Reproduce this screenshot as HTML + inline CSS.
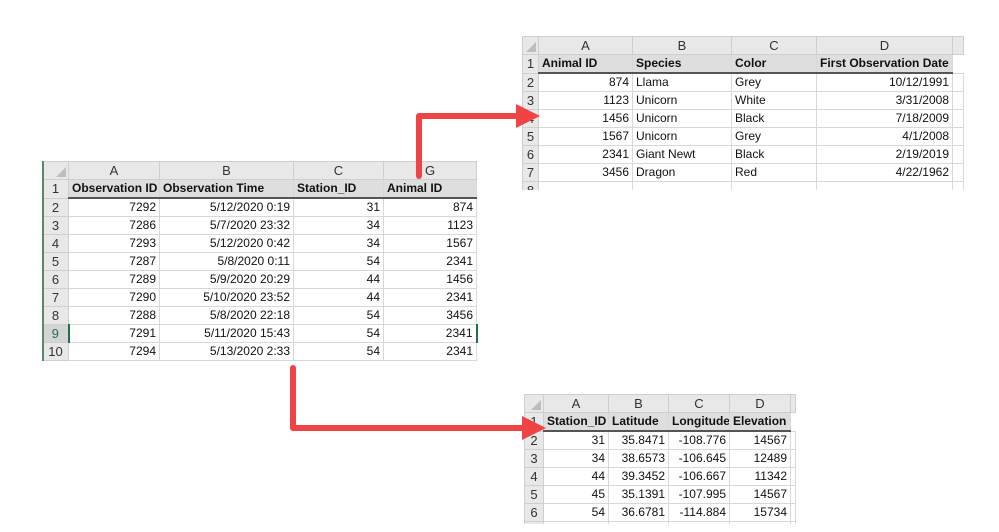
<!DOCTYPE html>
<html><head><meta charset="utf-8"><style>
body{margin:0;width:999px;height:532px;background:#fff;position:relative;overflow:hidden;font-family:"Liberation Sans",Arial,sans-serif;}
.w{position:absolute;overflow:hidden;}
table{border-collapse:collapse;table-layout:fixed;font-size:12px;color:#111;}
td{border:1px solid #d8d8d8;padding:0 3px;white-space:nowrap;overflow:hidden;height:17px;line-height:17px;}
tr.ch td{background:#e8e8e8;text-align:center;color:#333;border-color:#cfcfcf;font-size:13px}
td.rh{background:#e8e8e8;text-align:center;color:#333;padding:0;border-color:#cfcfcf;font-size:13px}
tr.h td:not(.rh){background:#dedede;font-weight:bold;border-bottom:2px solid #555;}
.r{text-align:right}
.corner{position:relative}
.corner:after{content:"";position:absolute;right:2px;bottom:2px;border-left:10px solid transparent;border-bottom:10px solid #bdbdbd;}
</style></head><body>

<table style="position:absolute;left:42px;top:161px;width:434px">
<colgroup><col style="width:26px"><col style="width:91px"><col style="width:134px"><col style="width:90px"><col style="width:93px"></colgroup>
<tr class="ch"><td class="corner"></td><td>A</td><td>B</td><td>C</td><td>G</td></tr>
<tr class="h"><td class="rh">1</td><td>Observation ID</td><td>Observation Time</td><td>Station_ID</td><td>Animal ID</td></tr>
<tr><td class="rh">2</td><td class="r">7292</td><td class="r">5/12/2020 0:19</td><td class="r">31</td><td class="r">874</td></tr>
<tr><td class="rh">3</td><td class="r">7286</td><td class="r">5/7/2020 23:32</td><td class="r">34</td><td class="r">1123</td></tr>
<tr><td class="rh">4</td><td class="r">7293</td><td class="r">5/12/2020 0:42</td><td class="r">34</td><td class="r">1567</td></tr>
<tr><td class="rh">5</td><td class="r">7287</td><td class="r">5/8/2020 0:11</td><td class="r">54</td><td class="r">2341</td></tr>
<tr><td class="rh">6</td><td class="r">7289</td><td class="r">5/9/2020 20:29</td><td class="r">44</td><td class="r">1456</td></tr>
<tr><td class="rh">7</td><td class="r">7290</td><td class="r">5/10/2020 23:52</td><td class="r">44</td><td class="r">2341</td></tr>
<tr><td class="rh">8</td><td class="r">7288</td><td class="r">5/8/2020 22:18</td><td class="r">54</td><td class="r">3456</td></tr>
<tr><td class="rh" style="background:#d4d4d4;color:#217346;border-right:2px solid #217346">9</td><td class="r">7291</td><td class="r">5/11/2020 15:43</td><td class="r">54</td><td class="r" style="border-right:2px solid #217346">2341</td></tr>
<tr><td class="rh">10</td><td class="r">7294</td><td class="r">5/13/2020 2:33</td><td class="r">54</td><td class="r">2341</td></tr>
</table>
<div style="position:absolute;left:42px;top:161px;width:2px;height:200px;background:#5a8a6a"></div>

<div class="w" style="left:522px;top:36px;width:442px;height:154px">
<table style="width:441px">
<colgroup><col style="width:16px"><col style="width:94px"><col style="width:99px"><col style="width:85px"><col style="width:136px"><col style="width:11px"></colgroup>
<tr class="ch"><td class="corner"></td><td>A</td><td>B</td><td>C</td><td>D</td><td></td></tr>
<tr class="h"><td class="rh">1</td><td>Animal ID</td><td>Species</td><td>Color</td><td>First Observation Date</td><td style="background:#fff;border:none"></td></tr>
<tr><td class="rh">2</td><td class="r">874</td><td>Llama</td><td>Grey</td><td class="r">10/12/1991</td><td></td></tr>
<tr><td class="rh">3</td><td class="r">1123</td><td>Unicorn</td><td>White</td><td class="r">3/31/2008</td><td></td></tr>
<tr><td class="rh">4</td><td class="r">1456</td><td>Unicorn</td><td>Black</td><td class="r">7/18/2009</td><td></td></tr>
<tr><td class="rh">5</td><td class="r">1567</td><td>Unicorn</td><td>Grey</td><td class="r">4/1/2008</td><td></td></tr>
<tr><td class="rh">6</td><td class="r">2341</td><td>Giant Newt</td><td>Black</td><td class="r">2/19/2019</td><td></td></tr>
<tr><td class="rh">7</td><td class="r">3456</td><td>Dragon</td><td>Red</td><td class="r">4/22/1962</td><td></td></tr>
<tr><td class="rh">8</td><td></td><td></td><td></td><td></td><td></td></tr>
</table></div>

<div class="w" style="left:524px;top:394px;width:272px;height:130px">
<table style="width:271px">
<colgroup><col style="width:19px"><col style="width:65px"><col style="width:60px"><col style="width:61px"><col style="width:61px"><col style="width:5px"></colgroup>
<tr class="ch"><td class="corner"></td><td>A</td><td>B</td><td>C</td><td>D</td><td></td></tr>
<tr class="h"><td class="rh">1</td><td>Station_ID</td><td>Latitude</td><td>Longitude</td><td>Elevation</td><td style="background:#fff;border:none"></td></tr>
<tr><td class="rh">2</td><td class="r">31</td><td class="r">35.8471</td><td class="r">-108.776</td><td class="r">14567</td><td></td></tr>
<tr><td class="rh">3</td><td class="r">34</td><td class="r">38.6573</td><td class="r">-106.645</td><td class="r">12489</td><td></td></tr>
<tr><td class="rh">4</td><td class="r">44</td><td class="r">39.3452</td><td class="r">-106.667</td><td class="r">11342</td><td></td></tr>
<tr><td class="rh">5</td><td class="r">45</td><td class="r">35.1391</td><td class="r">-107.995</td><td class="r">14567</td><td></td></tr>
<tr><td class="rh">6</td><td class="r">54</td><td class="r">36.6781</td><td class="r">-114.884</td><td class="r">15734</td><td></td></tr>
<tr><td class="rh"></td><td></td><td></td><td></td><td></td><td></td></tr>
</table></div>

<svg width="999" height="532" style="position:absolute;left:0;top:0" viewBox="0 0 999 532">
<g fill="none" stroke="#f04444" stroke-width="6" stroke-linejoin="round" stroke-linecap="round">
<path d="M419 176 V116 H518"/>
<path d="M293 368 V428 H524"/>
</g>
<polygon points="516,104 540,116 516,128" fill="#f04444"/>
<polygon points="522,416 546,428 522,440" fill="#f04444"/>
</svg>
</body></html>
